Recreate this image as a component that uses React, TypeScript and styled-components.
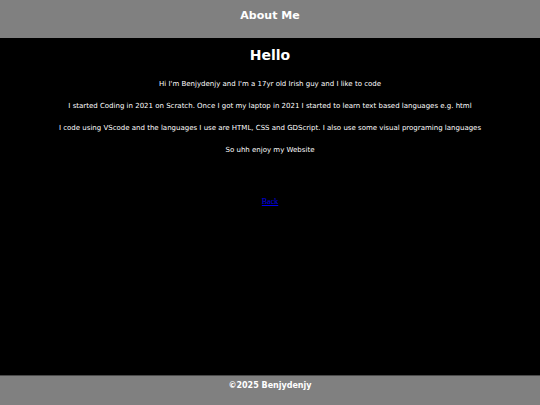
import React from "react";
import styled, { createGlobalStyle } from "styled-components";

const Global = createGlobalStyle`
  html, body { margin: 0; padding: 0; background: #000; }
  body { font-family: "DejaVu Sans", Verdana, sans-serif; }
`;

const Page = styled.div`
  display: flex;
  flex-direction: column;
  height: 405px;
  background: #000;
  color: #fff;
`;

const Header = styled.header`
  height: 38px;
  background: #808080;
  display: flex;
  align-items: center;
  justify-content: center;
  flex-shrink: 0;
`;

const Title = styled.h1`
  margin: 0 0 7px;
  font-size: 11px;
  font-weight: bold;
  color: #fff;
`;

const Main = styled.main`
  flex: 1;
  display: flex;
  flex-direction: column;
  align-items: center;
  text-align: center;
  padding-top: 9px;
`;

const Heading = styled.h2`
  margin: 0 0 16px;
  font-size: 14px;
  font-weight: bold;
  line-height: 17px;
`;

const Para = styled.p`
  margin: 0 0 13px;
  font-size: 7px;
  line-height: 9px;
`;

const BackLink = styled.a`
  margin-top: 29px;
  font-family: "Liberation Serif", "Times New Roman", serif;
  font-size: 8px;
  color: #0000ee;
  text-decoration: underline;
`;

const Footer = styled.footer`
  height: 29px;
  background: #808080;
  border-top: 1px solid #4a4a4a;
  display: flex;
  justify-content: center;
  flex-shrink: 0;
`;

const FooterText = styled.p`
  margin: 5px 0 0;
  font-size: 8px;
  font-weight: bold;
  color: #fff;
`;

export default function App() {
  return (
    <>
      <Global />
      <Page>
        <Header>
          <Title>About Me</Title>
        </Header>
        <Main>
          <Heading>Hello</Heading>
          <Para>Hi I'm Benjydenjy and I'm a 17yr old Irish guy and I like to code</Para>
          <Para>
            I started Coding in 2021 on Scratch. Once I got my laptop in 2021 I started to learn text based languages e.g. html
          </Para>
          <Para>
            I code using VScode and the languages I use are HTML, CSS and GDScript. I also use some visual programing languages
          </Para>
          <Para>So uhh enjoy my Website</Para>
          <BackLink href="#">Back</BackLink>
        </Main>
        <Footer>
          <FooterText>©2025 Benjydenjy</FooterText>
        </Footer>
      </Page>
    </>
  );
}
